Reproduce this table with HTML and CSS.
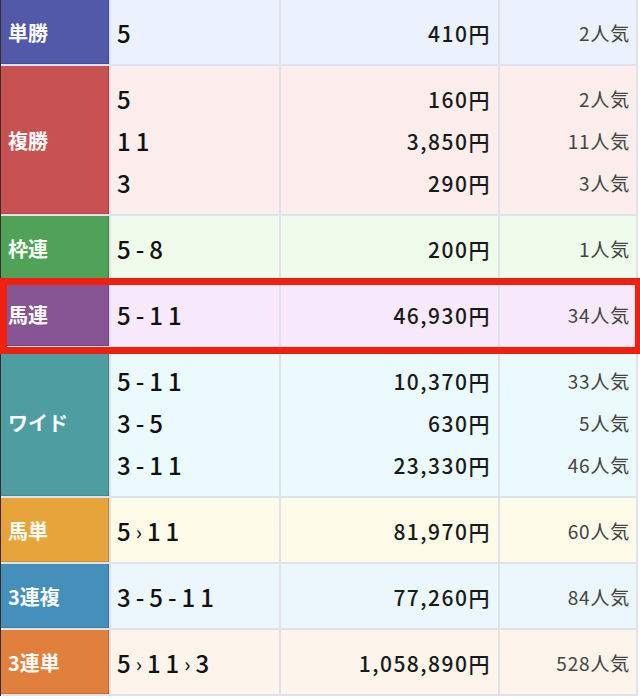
FILE: index.html
```html
<!DOCTYPE html>
<html lang="ja">
<head>
<meta charset="utf-8">
<title>払戻金</title>
<link rel="stylesheet" href="styles.css">
</head>
<body>
<div class="wrap">
  <div class="grid">
    <div class="lab c-tan">単勝</div>
    <div class="cell bg-tan combo"><div class="ln">5</div></div>
    <div class="cell bg-tan pay"><div class="ln">410円</div></div>
    <div class="cell bg-tan pop"><div class="ln">2人気</div></div>

    <div class="lab c-fuku">複勝</div>
    <div class="cell bg-fuku combo"><div class="ln">5</div><div class="ln">11</div><div class="ln">3</div></div>
    <div class="cell bg-fuku pay"><div class="ln">160円</div><div class="ln">3,850円</div><div class="ln">290円</div></div>
    <div class="cell bg-fuku pop"><div class="ln">2人気</div><div class="ln">11人気</div><div class="ln">3人気</div></div>

    <div class="lab c-waku">枠連</div>
    <div class="cell bg-waku combo"><div class="ln">5-8</div></div>
    <div class="cell bg-waku pay"><div class="ln">200円</div></div>
    <div class="cell bg-waku pop"><div class="ln">1人気</div></div>

    <div class="lab c-uren">馬連</div>
    <div class="cell bg-uren combo"><div class="ln">5-11</div></div>
    <div class="cell bg-uren pay"><div class="ln">46,930円</div></div>
    <div class="cell bg-uren pop"><div class="ln">34人気</div></div>

    <div class="lab c-wide">ワイド</div>
    <div class="cell bg-wide combo"><div class="ln">5-11</div><div class="ln">3-5</div><div class="ln">3-11</div></div>
    <div class="cell bg-wide pay"><div class="ln">10,370円</div><div class="ln">630円</div><div class="ln">23,330円</div></div>
    <div class="cell bg-wide pop"><div class="ln">33人気</div><div class="ln">5人気</div><div class="ln">46人気</div></div>

    <div class="lab c-utan">馬単</div>
    <div class="cell bg-utan combo"><div class="ln">5<span class="ar">›</span>11</div></div>
    <div class="cell bg-utan pay"><div class="ln">81,970円</div></div>
    <div class="cell bg-utan pop"><div class="ln">60人気</div></div>

    <div class="lab c-3fuku">3連複</div>
    <div class="cell bg-3fuku combo"><div class="ln">3-5-11</div></div>
    <div class="cell bg-3fuku pay"><div class="ln">77,260円</div></div>
    <div class="cell bg-3fuku pop"><div class="ln">84人気</div></div>

    <div class="lab c-3tan">3連単</div>
    <div class="cell bg-3tan combo"><div class="ln">5<span class="ar">›</span>11<span class="ar">›</span>3</div></div>
    <div class="cell bg-3tan pay"><div class="ln">1,058,890円</div></div>
    <div class="cell bg-3tan pop"><div class="ln">528人気</div></div>
  </div>
  <div class="highlight"></div>
</div>
</body>
</html>
```

FILE: styles.css
```css
* { box-sizing: border-box; }
html, body { margin: 0; padding: 0; background: #ffffff; }
body {
  font-family: "Noto Sans CJK JP", "Noto Sans", sans-serif;
  width: 640px;
  height: 699px;
  overflow: hidden;
}
.wrap {
  position: relative;
  width: 640px;
}
.grid {
  width: 638px;
  display: grid;
  grid-template-columns: 108px 168px 217px 136px;
  column-gap: 2px;
  row-gap: 2px;
  background: #dfe2ea;
  border-left: 1px solid #3b2b22;
  padding: 0 2px 2px 0;
}
.lab {
  display: flex;
  align-items: center;
  padding-left: 7px;
  color: #ffffff;
  font-weight: 700;
  font-size: 20px;
  box-shadow: inset -1px 0 0 rgba(0,0,0,0.18), inset 0 -1px 0 rgba(0,0,0,0.12);
}
.cell {
  padding: 11px 0;
  display: flex;
  flex-direction: column;
  justify-content: center;
}
.ln {
  height: 42px;
  line-height: 42px;
  padding-top: 1px;
  white-space: nowrap;
}
.combo {
  padding-left: 6px;
  font-size: 24px;
  font-weight: 500;
  color: #111111;
  letter-spacing: 5px;
}
.combo .ar {
  font-size: 20px;
  letter-spacing: 5px;
  position: relative;
  top: -1px;
}
.pay {
  text-align: right;
  padding-right: 7px;
  font-size: 21px;
  font-weight: 500;
  color: #1a1a1a;
  letter-spacing: 1.5px;
}
.pop {
  text-align: right;
  padding-right: 6px;
  font-size: 19px;
  color: #444444;
  letter-spacing: 0.8px;
}

.c-tan { background: #5159a8; }
.bg-tan { background: #ebf2fd; }
.c-fuku { background: #c85252; }
.bg-fuku { background: #fdeded; }
.c-waku { background: #4fa257; }
.bg-waku { background: #effbeb; }
.c-uren { background: #875593; }
.bg-uren { background: #f8eafc; }
.c-wide { background: #4e9ea1; }
.bg-wide { background: #eafafd; }
.c-utan { background: #e6a43a; }
.bg-utan { background: #fefbe9; }
.c-3fuku { background: #4490bb; }
.bg-3fuku { background: #ecf6fd; }
.c-3tan { background: #e17f3d; }
.bg-3tan { background: #fdf4ec; }

.highlight {
  position: absolute;
  left: 0;
  top: 278px;
  width: 640px;
  height: 76px;
  border: 7px solid #f02010;
  border-right-width: 5px;
  pointer-events: none;
}
```
